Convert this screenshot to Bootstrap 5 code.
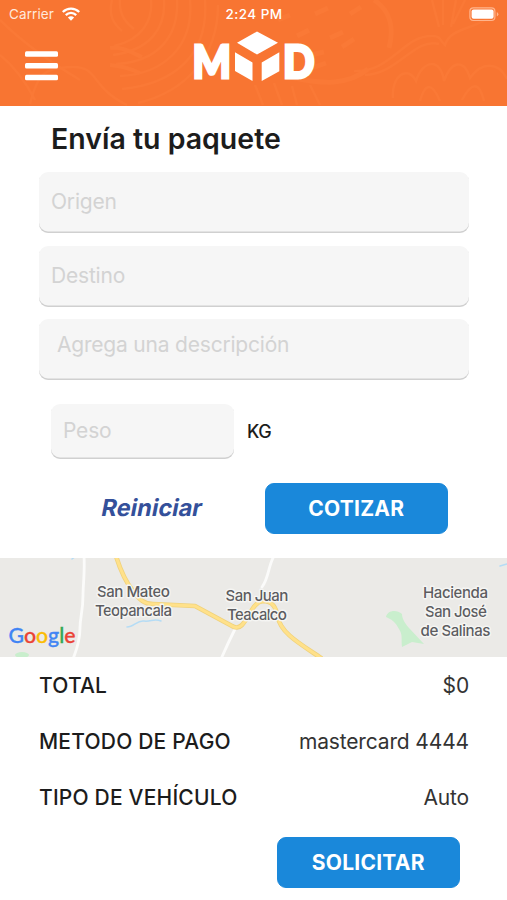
<!DOCTYPE html>
<html lang="es">
<head>
<meta charset="utf-8">
<meta name="viewport" content="width=device-width, initial-scale=1">
<title>Envía tu paquete</title>
<link href="https://cdn.jsdelivr.net/npm/bootstrap@5.3.0/dist/css/bootstrap.min.css" rel="stylesheet">
<style>
body{font-family:Inter,"Liberation Sans",sans-serif;color:#1c1c1c;background:#fff;height:900px;overflow:hidden}
.app-head{height:106px;background:#f87532;color:#fff}
.head-pattern{left:0;top:0}
.status{height:28px;padding:0 8px 0 9px;font-size:13.5px}
.status > *{flex:1 1 0}
.carrier{letter-spacing:.1px;color:#ffe9dc}
.clock{font-weight:500;letter-spacing:.45px}
.brand-row{height:78px;padding-left:25px}
.menu-btn{width:33px;height:30px;margin-top:23px}
.brand-logo{left:180px;top:14px}
.title-txt{font-size:28.5px;font-weight:600;line-height:34px;letter-spacing:0;margin:16px 0 16px 51px}
.fields{padding:0 38px 0 39px}
.field{background:#f6f6f6!important;border:0;box-shadow:inset 0 -1.5px 0 #d0d0d0;border-radius:9px;height:61px;padding:0 12px 2px;font-size:21px;color:#333;letter-spacing:-.2px;resize:none}
.field::placeholder{color:#d3d3d3;opacity:1}
.field-stack{gap:12.5px}
.field-desc{padding:11px 18px;line-height:30px}
.weight-row{padding-left:51px;margin-top:24px;gap:13px}
.field-kg{width:183px;height:55px}
.kg{font-size:18px;font-weight:500;letter-spacing:-.5px}
.actions{margin-top:24px;padding:0 59px 0 102px}
.reset{color:#34509a;font-size:23.5px;font-weight:650;letter-spacing:.05px;transform:skewX(-11deg);margin-top:-2px}
.btn-blue{--bs-btn-bg:#1a88da;--bs-btn-border-color:#1a88da;--bs-btn-color:#fff;width:183.5px;height:51px;border-radius:9px;font-size:21px;font-weight:650;letter-spacing:.25px;padding:0}
.map{height:99px;margin-top:24px}
.summary{padding:1px 38px 0 39px}
.sum-row{height:56px;font-size:21px;color:#333}
.sum-row dt{font-weight:500;color:#1c1c1c;letter-spacing:.2px}
.sum-row dd{letter-spacing:-.15px}
.submit{padding-right:47px;margin-top:11px}
</style>
</head>
<body>
<header class="app-head position-relative">
<svg class="head-pattern position-absolute" width="507" height="106" fill="none" stroke="#ff813e" stroke-width="2.5" opacity=".35" aria-hidden="true">
<path d="M112 0c-4 16 2 24 10 31M120 0c-1 14 5 22 14 29M151 0c2 20-9 40-37 46M164 0c2 28-14 50-51 55M177 0c2 37-20 62-61 64M190 0c4 46-26 74-70 76M205 0c4 56-32 84-83 89M218 5c0 53-34 87-80 98"/>
<path d="M110 48c12-2 22 5 32 9M110 65c13 1 21 4 30 8" stroke-width="4"/>
<path d="M0 20q30 30 80 60M0 55q20 16 35 45M30 104c8-32 15-36 42-37s18 20 55 38"/>
<path d="M374 0c17 11 20 29 15 48" stroke-width="5"/>
<path d="M354 71c37 2 50-37 79-35 8 0 7 5 12 9 5-17 27-15 45-28M365 75c33-1 50-38 74-31M432 0l7 27M443 0v25M456 0l-5 27M465 0l-12 24"/>
<path d="M278 20l12-5m7 21 12-6m6-16 13-6m2 30 13-6m7-18 11-7m-50 48 13-3m18-5 12-8m-42 29 14-5m-36 14c34 8 58 8 78-8" stroke-width="5"/>
<path d="M255 85l8 20M274 83l8 22M292 86l5 19M310 85l10 20M393 98c-2-21 14-34 23-17 7-22 25-23 28 0 7-20 20-23 26-3 12-17 29-16 37 1M420 101q8-28 20 0M462 100q15-28 22 1"/>
</svg>
<div class="status d-flex align-items-center position-relative">
<div class="carrier d-flex align-items-center"><span>Carrier</span>
<svg class="ms-2" width="18" height="14" viewBox="0 0 18 14" fill="none" stroke="#fff" stroke-width="2.3" aria-hidden="true"><path d="M.8 5C5.5.4 12.5.4 17.2 5M3.8 8.1c3-3 7.4-3 10.4 0"/><path d="M9 13.8 5.9 10.5c1.8-1.7 4.4-1.7 6.2 0z" fill="#fff" stroke="none"/></svg></div>
<div class="clock text-center">2:24 PM</div>
<div class="d-flex justify-content-end"><svg width="30" height="15" viewBox="0 0 30 15" aria-hidden="true"><rect x=".9" y=".9" width="25" height="12.6" rx="3.5" fill="none" stroke="#ffb58d" stroke-width="1.2"/><rect x="2.6" y="2.6" width="22" height="9.2" rx="2" fill="#fff"/><path d="M27.8 5v4.5q1.6-.6 1.6-2.2T27.8 5" fill="#ffb58d"/></svg></div>
</div>
<div class="brand-row position-relative">
<button class="menu-btn btn p-0 border-0 d-block" aria-label="Menú"><svg class="d-block" width="33" height="30" fill="#fff"><rect y="0.3" width="33" height="5.5" rx="1.5"/><rect y="12" width="33" height="5.5" rx="1.5"/><rect y="23.7" width="33" height="5.5" rx="1.5"/></svg></button>
</div>
<svg class="brand-logo position-absolute" width="150" height="88" viewBox="180 14 150 88" fill="#fff" font-family="Lato, sans-serif" font-weight="900" font-size="46"><g stroke="#fff" stroke-width="3"><text x="192.5" y="77.5" textLength="38.5" lengthAdjust="spacingAndGlyphs">M</text><text x="283" y="77.5" textLength="31.5" lengthAdjust="spacingAndGlyphs">D</text></g><path d="M257 31.5l21 11.2-21 11.8-20-11.8zM235 52.3l17.5 10.2V81L235 71zM279.3 52.3v19L261.7 81V62.5z"/></svg>
</header>
<main>
<h1 class="title-txt">Envía tu paquete</h1>
<div class="fields d-flex flex-column field-stack">
<input class="form-control field" placeholder="Origen">
<input class="form-control field" placeholder="Destino">
<textarea class="form-control field field-desc" rows="1" placeholder="Agrega una descripción"></textarea>
</div>
<div class="weight-row d-flex align-items-center"><input class="form-control field field-kg" placeholder="Peso"><span class="kg">KG</span></div>
<div class="actions d-flex align-items-center justify-content-between"><a class="reset text-decoration-none" href="#">Reiniciar</a><button class="btn btn-blue">COTIZAR</button></div>
<div class="map"><svg class="d-block" width="507" height="99" viewBox="0 558 507 99" font-family="Inter, sans-serif" role="img" aria-label="Mapa">
<rect y="558" width="507" height="99" fill="#ebeae7"/>
<g fill="none" stroke-linecap="round" stroke-linejoin="round">
<path d="M84 556c1 17-1 29-1 39 0 17-3 22-3 33s-3 21-7 31M274 556c-6 10-5 22-12 31M236 627q-8 16-15 32" stroke="#fbfbfa" stroke-width="2.8"/>
<path d="M127 627c7 0 10-7 17-6s10-3 17 0M72 559l4-3M500 566l7-2" stroke="#b5dcf5" stroke-width="1.5"/>
<path d="M116 556c4 13 9 25 17 35 7 9 11 13 20 13l42 2 37 20c3 2 7 2 10-1 8-9 11-23 21-24 10 0 13 7 15 16 2 16 24 28 43 41" stroke="#f0d27c" stroke-width="4.6"/>
<path d="M116 556c4 13 9 25 17 35 7 9 11 13 20 13l42 2 37 20c3 2 7 2 10-1 8-9 11-23 21-24 10 0 13 7 15 16 2 16 24 28 43 41" stroke="#ffe18a" stroke-width="3"/>
</g>
<path d="M386 617c1-7 11-8 16-3 0 5 3 9 7 14l15 16-12-2-10 5c-1-8 1-12-3-18-3-5-4-8-13-12z" fill="#c9eecd"/>
<ellipse cx="22" cy="655" rx="7" ry="3" fill="#c9eecd"/>
<g font-size="15.2" font-weight="450" fill="#5c5c60" text-anchor="middle" stroke="#f5f5f3" stroke-width="2.8" stroke-linejoin="round" paint-order="stroke">
<text x="133.5" y="597" textLength="73">San Mateo</text><text x="133.5" y="616" textLength="77">Teopancala</text>
<text x="257" y="601" textLength="63">San Juan</text><text x="257" y="620" textLength="60">Teacalco</text>
<text x="455.5" y="598" textLength="65">Hacienda</text><text x="456" y="617" textLength="62">San José</text><text x="455.5" y="635.5" textLength="70">de Salinas</text></g>
<text x="8.5" y="643" font-family="Lato, sans-serif" font-weight="500" font-size="22" textLength="67" lengthAdjust="spacingAndGlyphs" stroke-width=".35"><tspan fill="#4285f4" stroke="#4285f4">G</tspan><tspan fill="#ea4335" stroke="#ea4335">o</tspan><tspan fill="#fbbc05" stroke="#fbbc05">o</tspan><tspan fill="#4285f4" stroke="#4285f4">g</tspan><tspan fill="#34a853" stroke="#34a853">l</tspan><tspan fill="#ea4335" stroke="#ea4335">e</tspan></text>
</svg></div>
<dl class="summary mb-0">
<div class="sum-row d-flex align-items-center justify-content-between"><dt>TOTAL</dt><dd class="mb-0">$0</dd></div>
<div class="sum-row d-flex align-items-center justify-content-between"><dt>METODO DE PAGO</dt><dd class="mb-0">mastercard 4444</dd></div>
<div class="sum-row d-flex align-items-center justify-content-between"><dt>TIPO DE VEHÍCULO</dt><dd class="mb-0">Auto</dd></div>
</dl>
<div class="submit d-flex justify-content-end"><button class="btn btn-blue">SOLICITAR</button></div>
</main>
<script src="https://cdn.jsdelivr.net/npm/bootstrap@5.3.0/dist/js/bootstrap.bundle.min.js"></script>
</body>
</html>
